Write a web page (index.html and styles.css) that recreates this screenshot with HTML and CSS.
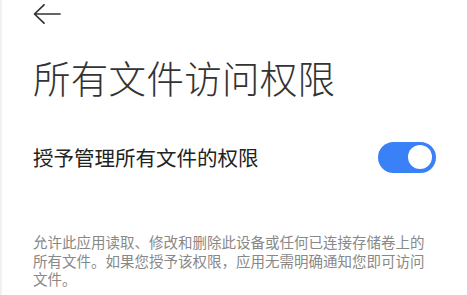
FILE: index.html
```html
<!DOCTYPE html>
<html lang="zh-CN">
<head>
<meta charset="utf-8">
<link rel="stylesheet" href="styles.css">
</head>
<body>
<div class="page">
  <div class="header">
    <svg class="back" width="28" height="21" viewBox="0 0 28 21">
      <path d="M1.5 10 H27 M11 0.8 L1.5 10 L11 19.2" fill="none" stroke="#333" stroke-width="1.7" stroke-linecap="round" stroke-linejoin="round"/>
    </svg>
  </div>
  <h1 class="title">所有文件访问权限</h1>
  <div class="row">
    <span class="label">授予管理所有文件的权限</span>
    <span class="switch"><span class="knob"></span></span>
  </div>
  <p class="desc">允许此应用读取、修改和删除此设备或任何已连接存储卷上的所有文件。如果您授予该权限，应用无需明确通知您即可访问文件。</p>
</div>
</body>
</html>
```
FILE: styles.css
```css
html, body {
  margin: 0;
  padding: 0;
  background: #fff;
}
body {
  font-family: "Noto Sans CJK SC", "Noto Sans", sans-serif;
  color: #333;
}
.page {
  width: 467px;
  height: 295px;
  box-sizing: border-box;
  border-left: 2px solid #f1f1f1;
  padding-left: 31px;
  padding-right: 31px;
  overflow: hidden;
}
.header {
  padding-top: 4px;
  height: 21px;
  display: flex;
  align-items: flex-start;
}
.back {
  display: block;
}
.title {
  margin: 30px 0 0;
  font-size: 37.5px;
  line-height: 44px;
  font-weight: 300;
  color: #333;
  letter-spacing: 0.3px;
}
.row {
  margin-top: 42px;
  display: flex;
  align-items: center;
  justify-content: space-between;
  height: 32px;
}
.label {
  font-size: 20.5px;
  line-height: 28px;
  color: #222;
}
.switch {
  width: 58px;
  height: 31px;
  border-radius: 16px;
  background: #3a80f6;
  display: flex;
  align-items: center;
  justify-content: flex-end;
  padding-right: 4px;
  box-sizing: border-box;
}
.knob {
  width: 24px;
  height: 24px;
  border-radius: 50%;
  background: #fff;
}
.desc {
  margin: 60px 0 0;
  width: 400px;
  font-size: 14.5px;
  line-height: 18.5px;
  color: #888;
}
```
